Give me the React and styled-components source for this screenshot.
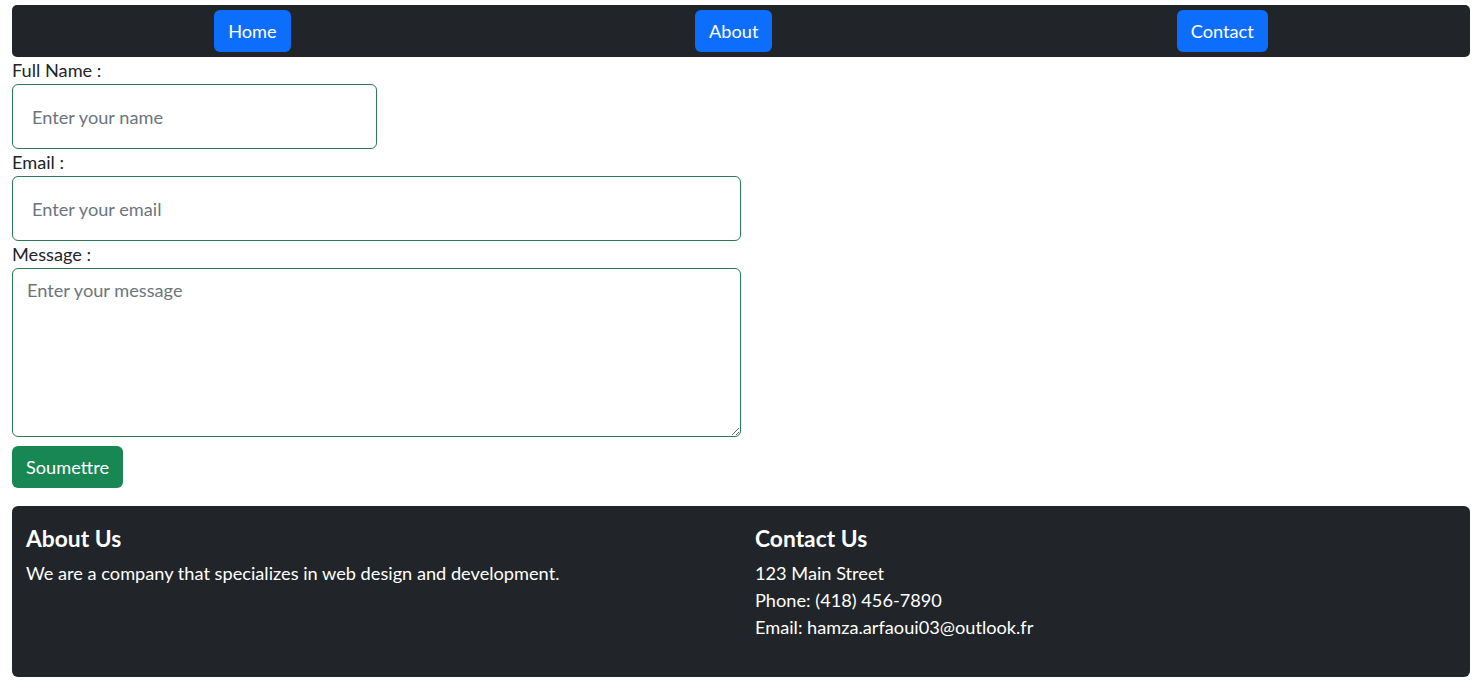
import styled, { createGlobalStyle } from "styled-components";

const GlobalStyle = createGlobalStyle`
  body {
    margin: 0;
    background: #ffffff;
    font-family: Lato, "Liberation Sans", sans-serif;
    color: #212529;
  }
  * {
    box-sizing: border-box;
  }
`;

const Page = styled.div`
  padding: 5px 9px 14px 12px;
`;

const NavBar = styled.nav`
  display: flex;
  flex-direction: row;
  align-items: center;
  justify-content: space-around;
  height: 52px;
  background-color: #212529;
  border-radius: 5px;
`;

const Button = styled.button`
  height: 42px;
  padding: 0 ${(p) => p.$px || 14}px;
  border: none;
  border-radius: 6px;
  background-color: ${(p) => p.$color || "#0d6efd"};
  color: #ffffff;
  font-family: inherit;
  font-size: 18.2px;
  cursor: pointer;
`;

const Form = styled.form`
  display: flex;
  flex-direction: column;
  align-items: flex-start;
`;

const Label = styled.label`
  display: block;
  font-size: 18.2px;
  line-height: 27px;
`;

const Input = styled.input`
  width: ${(p) => p.$width}px;
  height: 65px;
  padding: 0 19px;
  border: 1px solid #2b7a55;
  border-radius: 6px;
  font-family: inherit;
  font-size: 18.2px;
  color: #212529;
  &::placeholder {
    color: #6c757d;
  }
`;

const TextArea = styled.textarea`
  width: 729px;
  height: 169px;
  padding: 8px 14px;
  border: 1px solid #2b7a55;
  border-radius: 6px;
  font-family: inherit;
  font-size: 18.2px;
  line-height: 26px;
  color: #212529;
  &::placeholder {
    color: #6c757d;
  }
`;

const SubmitRow = styled.div`
  margin-top: 9px;
`;

const Footer = styled.footer`
  display: grid;
  grid-template-columns: 1fr 1fr;
  margin-top: 18px;
  height: 171px;
  background-color: #212529;
  border-radius: 6px;
  color: #ffffff;
`;

const Column = styled.div`
  padding: 19px 14px;
`;

const Heading = styled.h5`
  margin: 0 0 9px;
  font-size: 22.8px;
  font-weight: 700;
  line-height: 26px;
`;

const Line = styled.p`
  margin: 0;
  font-size: 18.2px;
  line-height: 27px;
`;

export default function App() {
  return (
    <>
      <GlobalStyle />
      <Page>
        <NavBar>
          <Button>Home</Button>
          <Button>About</Button>
          <Button>Contact</Button>
        </NavBar>
        <Form onSubmit={(e) => e.preventDefault()}>
          <Label htmlFor="name">Full Name :</Label>
          <Input id="name" $width={365} placeholder="Enter your name" />
          <Label htmlFor="email">Email :</Label>
          <Input id="email" $width={729} placeholder="Enter your email" />
          <Label htmlFor="message">Message :</Label>
          <TextArea id="message" placeholder="Enter your message" />
          <SubmitRow>
            <Button type="submit" $color="#198754">
              Soumettre
            </Button>
          </SubmitRow>
        </Form>
        <Footer>
          <Column>
            <Heading>About Us</Heading>
            <Line>We are a company that specializes in web design and development.</Line>
          </Column>
          <Column>
            <Heading>Contact Us</Heading>
            <Line>123 Main Street</Line>
            <Line>Phone: (418) 456-7890</Line>
            <Line>Email: hamza.arfaoui03@outlook.fr</Line>
          </Column>
        </Footer>
      </Page>
    </>
  );
}
